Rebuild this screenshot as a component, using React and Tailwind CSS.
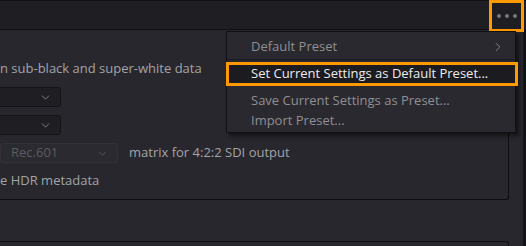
import { ChevronDown, ChevronRight } from 'lucide-react';

const FONT = { fontFamily: '"Open Sans", "Noto Sans", sans-serif' };

function Dropdown({ width, label, disabled }) {
  return (
    <div
      className={
        'flex h-[20px] items-center justify-between rounded-[3px] border pl-[10px] pr-[8px] ' +
        (disabled ? 'border-[#323137] bg-[#2b2a30]' : 'border-[#141317] bg-[#1f1e23]')
      }
      style={{ width }}
    >
      <span className={disabled ? 'text-[#5c5b61]' : 'text-[#a3a3a8]'}>{label}</span>
      <ChevronDown size={13} strokeWidth={1.6} className={disabled ? 'text-[#5c5b61]' : 'text-[#8c8c91]'} />
    </div>
  );
}

function MenuItem({ children, chevron }) {
  return (
    <div className="flex h-[20px] items-center justify-between pl-[24px] pr-[10px] text-[#8f8f94]">
      <span>{children}</span>
      {chevron && <ChevronRight size={14} strokeWidth={1.5} className="text-[#8f8f94]" />}
    </div>
  );
}

export default function App() {
  return (
    <div className="relative h-[246px] w-[526px] overflow-hidden bg-[#28272d] text-[13px]" style={FONT}>
      {/* top bar */}
      <div className="h-[30px] border-t border-b border-[#111014] bg-[#1f1e23]" />

      <div className="flex">
        <div className="w-[509px]">
          {/* settings panel */}
          <div className="h-[170px] rounded-br-[3px] border-r border-b border-[#0e0d11] pt-[25px] text-[#a3a3a8]">
            <div className="flex h-[28px] items-center">n sub-black and super-white data</div>
            <div className="flex h-[28px] items-center">
              <div className="-ml-[20px]">
                <Dropdown width={81} label="" />
              </div>
            </div>
            <div className="flex h-[28px] items-center">
              <div className="-ml-[20px]">
                <Dropdown width={81} label="" />
              </div>
            </div>
            <div className="flex h-[28px] items-center gap-[11px]">
              <Dropdown width={118} label="Rec.601" disabled />
              <span>matrix for 4:2:2 SDI output</span>
            </div>
            <div className="flex h-[28px] items-center">e HDR metadata</div>
          </div>
          {/* next panel */}
          <div className="mt-[41px] h-[20px] rounded-tr-[3px] border-t border-r border-[#0e0d11]" />
        </div>
        <div className="ml-[14px] h-[216px] w-[3px] bg-[#141317]" />
      </div>

      {/* options button highlight */}
      <div className="absolute left-[489px] top-0 flex h-[32px] w-[35px] items-center justify-center gap-[4px] border-[3px] border-[#ff9a00]">
        <span className="h-[4px] w-[4px] rounded-full bg-[#77767c]" />
        <span className="h-[4px] w-[4px] rounded-full bg-[#77767c]" />
        <span className="h-[4px] w-[4px] rounded-full bg-[#77767c]" />
      </div>

      {/* dropdown menu */}
      <div className="absolute left-[226px] top-[31px] w-[290px] border border-[#111014] bg-[#2a292f] pt-[5px] pb-[1px] shadow-[3px_3px_4px_rgba(0,0,0,0.55)]">
        <MenuItem chevron>Default Preset</MenuItem>
        <div className="mt-[2px] h-px bg-[#1c1b20]" />
        <div className="-ml-[1px] -mr-[3px] mt-[2px] flex h-[24px] items-center border-[3px] border-[#ff9a00] bg-[#1c1b20] pl-[22px] text-[#ececec]">
          Set Current Settings as Default Preset...
        </div>
        <div className="mt-[5px]">
          <MenuItem>Save Current Settings as Preset...</MenuItem>
          <MenuItem>Import Preset...</MenuItem>
        </div>
      </div>
    </div>
  );
}
